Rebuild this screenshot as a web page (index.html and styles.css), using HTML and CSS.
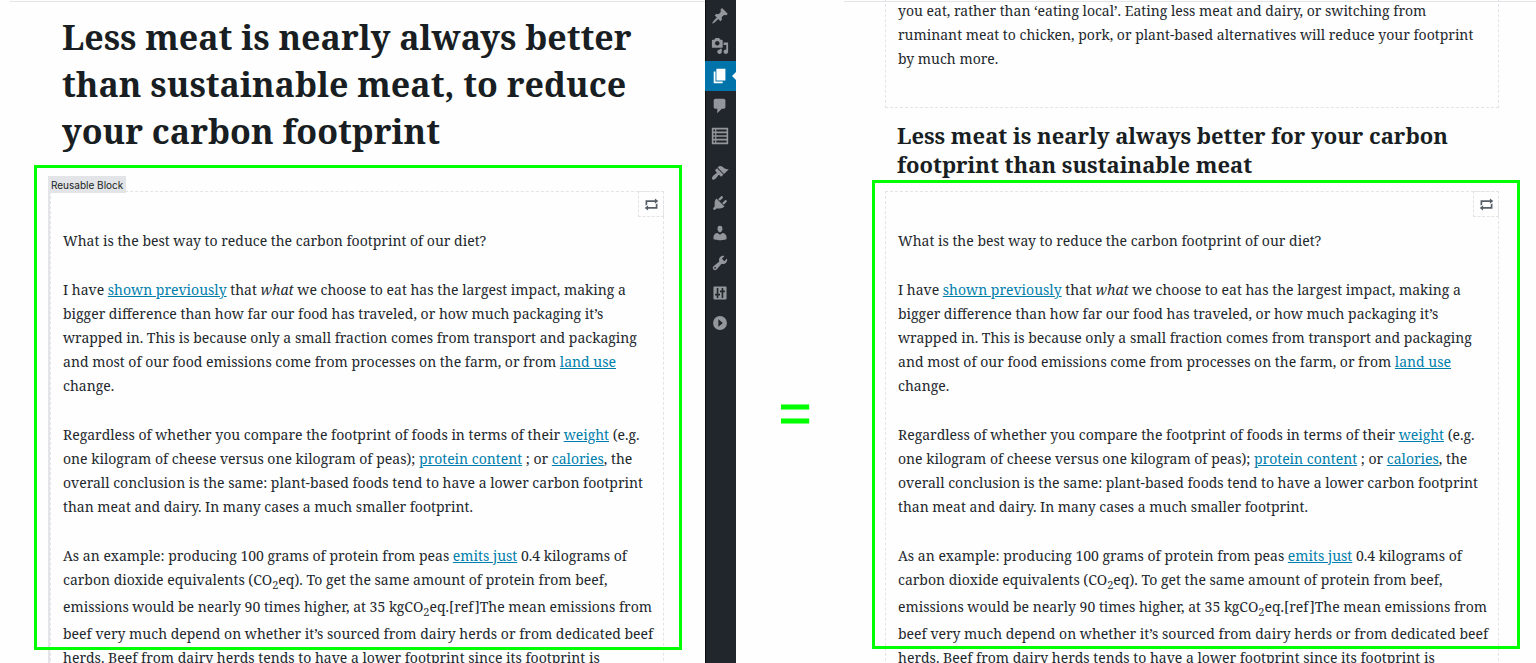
FILE: index.html
```html
<!DOCTYPE html>
<html lang="en">
<head>
<meta charset="utf-8">
<title>Reusable block comparison</title>
<link rel="stylesheet" href="styles.css">
</head>
<body>
<svg class="sprite" aria-hidden="true">
  <symbol id="repeat" viewBox="0 0 20 20"><path d="M5 7v3l-2 1.500V5h11V3l4 3.010L14 9V7H5zm10 6v-3l2-1.500V15H6v2l-4-3.010L6 11v2h9z"/></symbol>
</svg>
<div class="comparison">
  <main class="pane pane-main">
    <h1>Less meat is nearly always better<br>than sustainable meat, to reduce<br>your carbon footprint</h1>
    <section class="block selected">
      <span class="block-label">Reusable Block</span>
      <button class="convert" aria-label="Convert block"><svg><use href="#repeat"/></svg></button>
      <p>What is the best way to reduce the carbon footprint of our diet?</p>
      <p>I have <a href="#">shown previously</a> that <em>what</em> we choose to eat has the largest impact, making a<br>bigger difference than how far our food has traveled, or how much packaging it’s<br>wrapped in. This is because only a small fraction comes from transport and packaging<br>and most of our food emissions come from processes on the farm, or from <a href="#">land use</a><br>change.</p>
      <p>Regardless of whether you compare the footprint of foods in terms of their <a href="#">weight</a> (e.g.<br>one kilogram of cheese versus one kilogram of peas); <a href="#">protein content</a> ; or <a href="#">calories</a>, the<br>overall conclusion is the same: plant-based foods tend to have a lower carbon footprint<br>than meat and dairy. In many cases a much smaller footprint.</p>
      <p>As an example: producing 100 grams of protein from peas <a href="#">emits just</a> 0.4 kilograms of<br>carbon dioxide equivalents (CO<sub>2</sub>eq). To get the same amount of protein from beef,<br>emissions would be nearly 90 times higher, at 35 kgCO<sub>2</sub>eq.[ref]The mean emissions from<br>beef very much depend on whether it’s sourced from dairy herds or from dedicated beef<br>herds. Beef from dairy herds tends to have a lower footprint since its footprint is</p>
    </section>
    <div class="highlight highlight-main"></div>
  </main>

  <nav class="admin-menu" aria-label="Admin menu">
    <a href="#" aria-label="Posts"><svg viewBox="0 0 20 20"><path d="M10.440 3.020l1.820-1.820 6.360 6.350-1.830 1.820c-1.050-.68-2.480-.57-3.410.36l-.75.75c-.92.93-1.040 2.350-.35 3.410l-1.830 1.820-2.410-2.410-2.800 2.790c-.42.42-3.380 2.710-3.800 2.290s1.860-3.390 2.280-3.810l2.790-2.790L4.100 9.360l1.830-1.820c1.050.69 2.480.57 3.400-.36l.75-.75c.93-.92 1.050-2.350.36-3.410z"/></svg></a>
    <a href="#" aria-label="Media"><svg viewBox="0 0 20 20"><path fill-rule="evenodd" d="M13 11V4c0-.55-.45-1-1-1h-1.670L9 1H5L3.670 3H2c-.55 0-1 .45-1 1v7c0 .55.45 1 1 1h10c.55 0 1-.45 1-1zM7 4.500c1.380 0 2.500 1.120 2.500 2.500S8.380 9.500 7 9.500 4.500 8.380 4.500 7 5.620 4.500 7 4.500zM14 6h5v10.500c0 1.380-1.120 2.500-2.500 2.500S14 17.880 14 16.500s1.120-2.500 2.500-2.500c.17 0 .34.02.5.05V9h-3V6zm-4 8.050V13h2v3.500c0 1.380-1.120 2.500-2.500 2.500S7 17.880 7 16.500 8.120 14 9.500 14c.17 0 .34.02.5.05z"/></svg></a>
    <a href="#" class="current" aria-label="Pages"><svg viewBox="0 0 20 20"><path d="M6 15V2h10v13H6zm-1 1h8v2H3V5h2v11z"/></svg></a>
    <a href="#" aria-label="Comments"><svg viewBox="0 0 20 20"><path d="M5 2h9c1.100 0 2 .9 2 2v7c0 1.100-.9 2-2 2h-2l-5 5v-5H5c-1.100 0-2-.9-2-2V4c0-1.100.9-2 2-2z"/></svg></a>
    <a href="#" aria-label="Tables"><svg viewBox="-1 -1 22 22"><path fill-rule="evenodd" d="M0 0h20v20H0zM2 2v2.500h2V2zM5.500 2v2.500H18V2zM2 6.500V9h2V6.500zM5.500 6.500V9H18V6.500zM2 11v2.500h2V11zM5.500 11v2.500H18V11zM2 15.500V18h2v-2.500zM5.500 15.500V18H18v-2.500z"/></svg></a>
    <a href="#" class="section-start" aria-label="Appearance"><svg viewBox="0 0 20 20"><path d="M14.480 11.060L7.410 3.990l1.500-1.500c.5-.56 2.300-.47 3.510.32 1.210.8 1.430 1.280 2.910 2.100 1.180.64 2.450 1.260 4.450.85zm-.71.71L6.700 4.700 4.930 6.470c-.39.39-.39 1.020 0 1.410l1.060 1.060c.39.39.39 1.030 0 1.420-.6.6-1.430 1.110-2.210 1.690-.35.26-.7.53-1.010.84C1.430 14.230.4 16.080 1.400 17.070c.99 1 2.840-.03 4.180-1.360.31-.31.58-.66.85-1.020.57-.78 1.080-1.610 1.690-2.210.39-.39 1.020-.39 1.410 0l1.060 1.060c.39.39 1.020.39 1.410 0z"/></svg></a>
    <a href="#" aria-label="Plugins"><svg viewBox="0 0 20 20"><path d="M13.110 4.360L9.870 7.600 8 5.730l3.240-3.240c.35-.34 1.050-.2 1.560.32.52.51.66 1.210.31 1.550zm-8 1.770l.91-1.120 9.010 9.010-1.190.84c-.71.71-2.630 1.160-3.820 1.160H6.140L4.900 17.260c-.59.59-1.540.59-2.120 0-.59-.58-.59-1.530 0-2.120l1.240-1.240v-3.880c0-1.130.4-3.190 1.090-3.890zm7.260 3.970l3.240-3.240c.34-.35 1.040-.21 1.550.31.52.51.66 1.210.31 1.550l-3.240 3.250z"/></svg></a>
    <a href="#" aria-label="Users"><svg viewBox="0 0 20 20"><path d="M10 9.250c-2.270 0-2.730-3.440-2.730-3.440C7 4.020 7.820 2 9.970 2c2.160 0 2.980 2.020 2.710 3.810 0 0-.41 3.440-2.680 3.440zm0 2.570L12.720 10c2.390 0 4.520 2.330 4.520 4.530v2.490s-3.650 1.130-7.240 1.130c-3.650 0-7.240-1.130-7.240-1.130v-2.490c0-2.250 1.940-4.480 4.470-4.480z"/></svg></a>
    <a href="#" aria-label="Tools"><svg viewBox="0 0 20 20"><path fill-rule="evenodd" d="M16.680 9.770c-1.340 1.340-3.300 1.670-4.950.99l-5.410 6.520c-.99.99-2.590.99-3.580 0s-.99-2.590 0-3.570l6.520-5.420c-.68-1.650-.35-3.610.99-4.950 1.280-1.280 3.120-1.620 4.720-1.060l-2.890 2.890 2.820 2.820 2.860-2.870c.53 1.580.18 3.390-1.080 4.650zM3.810 16.210c.4.39 1.040.39 1.430 0 .4-.4.4-1.040 0-1.430-.39-.4-1.030-.4-1.430 0-.39.39-.39 1.030 0 1.430z"/></svg></a>
    <a href="#" aria-label="Settings"><svg viewBox="-1 -1 22 22"><path fill-rule="evenodd" d="M3 2h14a1 1 0 0 1 1 1v14a1 1 0 0 1-1 1H3a1 1 0 0 1-1-1V3a1 1 0 0 1 1-1zM6 4v7H4v2h2v3h2v-3h2v-2H8V4zM12 4v3h-2v2h2v7h2V9h2V7h-2V4z"/></svg></a>
    <a href="#" aria-label="Collapse menu"><svg viewBox="-1 -1 22 22"><path fill-rule="evenodd" d="M10 1.500a8.500 8.500 0 1 1 0 17 8.500 8.500 0 0 1 0-17zM8 5.500v9l5.500-4.500z"/></svg></a>
  </nav>

  <div class="equals">=</div>

  <section class="pane pane-copy">
    <div class="block block-end">
      <p>you eat, rather than ‘eating local’. Eating less meat and dairy, or switching from<br>ruminant meat to chicken, pork, or plant-based alternatives will reduce your footprint<br>by much more.</p>
    </div>
    <h2>Less meat is nearly always better for your carbon<br>footprint than sustainable meat</h2>
    <div class="block">
      <button class="convert" aria-label="Convert block"><svg><use href="#repeat"/></svg></button>
      <p>What is the best way to reduce the carbon footprint of our diet?</p>
      <p>I have <a href="#">shown previously</a> that <em>what</em> we choose to eat has the largest impact, making a<br>bigger difference than how far our food has traveled, or how much packaging it’s<br>wrapped in. This is because only a small fraction comes from transport and packaging<br>and most of our food emissions come from processes on the farm, or from <a href="#">land use</a><br>change.</p>
      <p>Regardless of whether you compare the footprint of foods in terms of their <a href="#">weight</a> (e.g.<br>one kilogram of cheese versus one kilogram of peas); <a href="#">protein content</a> ; or <a href="#">calories</a>, the<br>overall conclusion is the same: plant-based foods tend to have a lower carbon footprint<br>than meat and dairy. In many cases a much smaller footprint.</p>
      <p>As an example: producing 100 grams of protein from peas <a href="#">emits just</a> 0.4 kilograms of<br>carbon dioxide equivalents (CO<sub>2</sub>eq). To get the same amount of protein from beef,<br>emissions would be nearly 90 times higher, at 35 kgCO<sub>2</sub>eq.[ref]The mean emissions from<br>beef very much depend on whether it’s sourced from dairy herds or from dedicated beef<br>herds. Beef from dairy herds tends to have a lower footprint since its footprint is</p>
    </div>
    <div class="highlight highlight-copy"></div>
  </section>
</div>
</body>
</html>
```

FILE: styles.css
```css
* { box-sizing: border-box; }

body {
  margin: 0;
  background: #fefefe;
  color: #23282d;
  font-family: "Noto Serif", "Droid Serif", "DejaVu Serif", serif;
  font-size: 14px;
  line-height: 24px;
}

.sprite { position: absolute; width: 0; height: 0; }

.comparison {
  display: grid;
  grid-template-columns: 705fr 31px 108fr 692fr;
  height: 100vh;
  overflow: hidden;
}

.pane {
  position: relative;
  min-width: 0;
  overflow: hidden;
  white-space: nowrap;
}

.pane::before {
  content: "";
  position: absolute;
  top: 1px;
  left: 0;
  right: 0;
  border-top: 1px solid #e2e4e7;
}

.pane-main { padding: 14px 41px 0 48px; }
.pane-main::before { left: 10px; }
.pane-copy { padding: 0 37px 0 41px; }

h1, h2 { margin: 0; color: #191e23; font-weight: 700; }
h1 { padding-left: 14px; margin-bottom: 36px; font-size: 34px; line-height: 47px; }
h2 { padding-left: 12px; margin: 13px 0 12px; font-size: 22px; line-height: 29px; }

.block {
  position: relative;
  padding: 37px 12px 0;
  border: 1px dashed #e2e4e7;
}

.block p { margin: 0 0 25px; }
.block a { color: #007fac; text-decoration: underline; }
.block sub { font-size: 11px; line-height: 20px; }

.selected { margin-left: 2px; box-shadow: -2px 0 0 #e2e4e7; }

.block-end {
  margin-top: -1px;
  padding-top: 0;
  padding-bottom: 11px;
  border-top: 0;
}

.block-label {
  position: absolute;
  left: -3px;
  top: -16px;
  padding: 1px 3px 0;
  background: #e2e4e7;
  color: #191e23;
  font: 10px/16px Inter, sans-serif;
}

.convert {
  position: absolute;
  top: -1px;
  right: -1px;
  display: grid;
  place-items: center;
  width: 26px;
  height: 26px;
  padding: 0;
  border: 1px dashed #e2e4e7;
  background: none;
}

.convert svg { width: 17px; height: 17px; fill: #555d66; }

.highlight { position: absolute; border: 3px solid #00ff00; pointer-events: none; }
.highlight-main { top: 165px; left: 34px; right: 23px; height: 485px; }
.highlight-copy { top: 180px; left: 28px; right: 16px; height: 469px; }

.admin-menu {
  display: flex;
  flex-direction: column;
  padding-top: 1px;
  background: #20262b;
  box-shadow: inset 1px 0 0 #0b0e10;
}

.admin-menu a {
  position: relative;
  display: grid;
  place-items: center;
  height: 30px;
  padding-right: 1px;
}

.admin-menu svg { width: 18px; height: 18px; fill: #93979c; }
.admin-menu .section-start { margin-top: 7px; }
.admin-menu .current { background: #0073aa; }
.admin-menu .current svg { fill: #fff; }

.admin-menu .current::after {
  content: "";
  position: absolute;
  top: 11px;
  right: 0;
  border: 4px solid transparent;
  border-left: 0;
  border-right-color: #fff;
}

.equals {
  display: grid;
  place-items: start center;
  padding: 383px 0 0 10px;
  color: #00ff00;
  font: 56px/60px "Liberation Sans", Arial, sans-serif;
  -webkit-text-stroke: 1px #00ff00;
}
```
